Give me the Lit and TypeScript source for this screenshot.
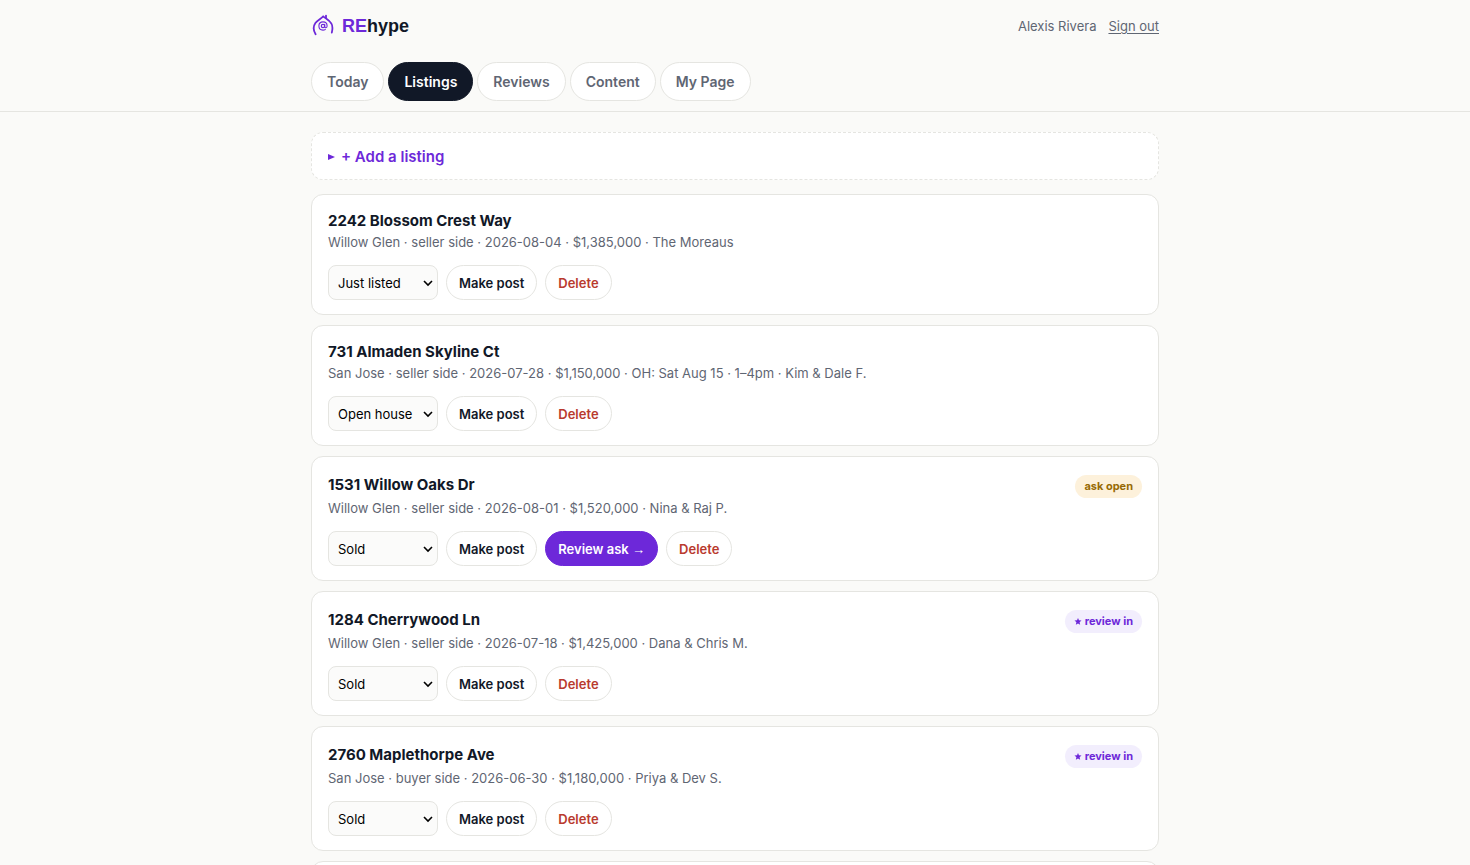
import { LitElement, html, css, nothing } from "lit";
import { customElement, property } from "lit/decorators.js";
import { classMap } from "lit/directives/class-map.js";

type Review = "open" | "in" | null;

interface Listing {
  address: string;
  meta: string;
  status: string;
  review: Review;
}

const STATUSES = ["Just listed", "Open house", "Pending", "Sold"];

const TABS = ["Today", "Listings", "Reviews", "Content", "My Page"];

const LISTINGS: Listing[] = [
  {
    address: "2242 Blossom Crest Way",
    meta: "Willow Glen · seller side · 2026-08-04 · $1,385,000 · The Moreaus",
    status: "Just listed",
    review: null,
  },
  {
    address: "731 Almaden Skyline Ct",
    meta: "San Jose · seller side · 2026-07-28 · $1,150,000 · OH: Sat Aug 15 · 1–4pm · Kim & Dale F.",
    status: "Open house",
    review: null,
  },
  {
    address: "1531 Willow Oaks Dr",
    meta: "Willow Glen · seller side · 2026-08-01 · $1,520,000 · Nina & Raj P.",
    status: "Sold",
    review: "open",
  },
  {
    address: "1284 Cherrywood Ln",
    meta: "Willow Glen · seller side · 2026-07-18 · $1,425,000 · Dana & Chris M.",
    status: "Sold",
    review: "in",
  },
  {
    address: "2760 Maplethorpe Ave",
    meta: "San Jose · buyer side · 2026-06-30 · $1,180,000 · Priya & Dev S.",
    status: "Sold",
    review: "in",
  },
];

@customElement("listing-card")
export class ListingCard extends LitElement {
  @property({ attribute: false }) listing!: Listing;

  static styles = css`
    :host {
      display: block;
      padding: 14px 16px;
      background: #fff;
      border: 1px solid #e5e5e1;
      border-radius: 12px;
    }
    .top {
      display: flex;
      justify-content: space-between;
      align-items: baseline;
      gap: 8px;
    }
    .address {
      margin: 0;
      font-size: 15px;
      line-height: 23px;
      font-weight: 700;
    }
    .badge {
      margin-top: 4px;
      padding: 3px 9px;
      border-radius: 999px;
      font-size: 11px;
      line-height: 17px;
      font-weight: 700;
      white-space: nowrap;
    }
    .badge.open {
      background: #fdf1db;
      color: #976a05;
    }
    .badge.in {
      background: #f2eefd;
      color: #6d28d9;
    }
    .star {
      width: 8px;
      height: 7px;
    }
    .meta {
      margin: 0;
      color: #5f6673;
      font-size: 13px;
      line-height: 20px;
    }
    .actions {
      display: flex;
      flex-wrap: wrap;
      align-items: center;
      gap: 8px;
      margin-top: 13px;
    }
    select,
    button {
      box-sizing: border-box;
      height: 35px;
      border: 1px solid #e5e5e1;
      font-family: inherit;
      font-size: 13px;
    }
    .picker {
      position: relative;
      display: flex;
    }
    select {
      appearance: none;
      width: 110px;
      padding: 0 20px 0 9px;
      border-radius: 8px;
      background: #fbfbfa;
      color: #000;
    }
    .chevron {
      position: absolute;
      right: 5px;
      top: 13px;
      width: 10px;
      height: 10px;
      pointer-events: none;
    }
    button {
      padding: 0 12px;
      border-radius: 999px;
      background: #fff;
      color: #111827;
      font-weight: 600;
      cursor: pointer;
    }
    .primary {
      background: #6d28d9;
      border-color: #6d28d9;
      color: #fff;
    }
    .arrow {
      font-family: "Liberation Sans", sans-serif;
      font-weight: 400;
    }
    .danger {
      color: #b93a2e;
    }
  `;

  render() {
    const { address, meta, status, review } = this.listing;
    return html`
      <div class="top">
        <h2 class="address">${address}</h2>
        ${review === "open" ? html`<span class="badge open">ask open</span>` : nothing}
        ${review === "in"
          ? html`<span class="badge in"
              ><svg class="star" viewBox="0 0 10 10" fill="currentColor" aria-hidden="true">
                <path d="M5 0L6.4 3.3L10 3.7L7.3 6L8.1 9.7L5 7.8L1.9 9.7L2.7 6L0 3.7L3.6 3.3Z" />
              </svg>
              review in</span
            >`
          : nothing}
      </div>
      <p class="meta">${meta}</p>
      <div class="actions">
        <div class="picker">
          <select aria-label="Status of ${address}">
            ${STATUSES.map((s) => html`<option ?selected=${s === status}>${s}</option>`)}
          </select>
          <svg class="chevron" viewBox="0 0 10 10" fill="none" stroke="#000" stroke-width="1.6" aria-hidden="true">
            <path d="M1 3L5 7L9 3" />
          </svg>
        </div>
        <button type="button">Make post</button>
        ${review === "open"
          ? html`<button type="button" class="primary">Review ask <span class="arrow">→</span></button>`
          : nothing}
        <button type="button" class="danger">Delete</button>
      </div>
    `;
  }
}

@customElement("app-root")
export class AppRoot extends LitElement {
  static styles = css`
    :host {
      display: block;
      min-height: 100vh;
      background: #fafaf8;
      color: #111827;
      font-family: Inter, "Liberation Sans", sans-serif;
    }
    .wrap {
      box-sizing: border-box;
      max-width: 880px;
      margin: 0 auto;
      padding: 0 16px;
    }
    .header {
      border-bottom: 1px solid #e5e5e1;
    }
    .bar {
      display: flex;
      align-items: center;
      justify-content: space-between;
      padding: 12px 0;
    }
    .brand {
      display: flex;
      align-items: center;
      gap: 7px;
      color: inherit;
      text-decoration: none;
      font-family: "Liberation Sans", Arial, sans-serif;
      font-size: 18px;
      line-height: 28px;
      font-weight: 700;
    }
    .logo {
      width: 24px;
      height: 24px;
    }
    .re {
      color: #6d28d9;
    }
    .user {
      display: flex;
      gap: 12px;
      color: #5f6673;
      font-size: 13px;
      line-height: 20px;
    }
    .user a {
      color: inherit;
      text-underline-offset: 2px;
    }
    .tabs {
      display: flex;
      gap: 4px;
      padding: 10px 0;
    }
    .tab {
      padding: 8px 15px;
      border: 1px solid #e5e5e1;
      border-radius: 999px;
      background: #fff;
      color: #5f6673;
      font-size: 14px;
      line-height: 21px;
      font-weight: 600;
      text-decoration: none;
    }
    .tab.active {
      background: #111827;
      border-color: #111827;
      color: #fff;
    }
    .list {
      display: flex;
      flex-direction: column;
      gap: 10px;
      padding-top: 20px;
    }
    .add {
      margin-bottom: 4px;
      padding: 13px 16px 11px;
      border: 1px dashed #e5e5e1;
      border-radius: 12px;
      background: #fff;
    }
    .add summary {
      display: flex;
      align-items: center;
      gap: 6px;
      color: #6d28d9;
      font-size: 15px;
      line-height: 22px;
      font-weight: 600;
      cursor: pointer;
    }
    .add summary::before {
      content: "";
      border-left: 7px solid currentColor;
      border-top: 3px solid transparent;
      border-bottom: 3px solid transparent;
    }
    .next {
      min-height: 32px;
      background: #fff;
      border: 1px solid #e5e5e1;
      border-radius: 12px;
    }
  `;

  render() {
    return html`
      <header class="header">
        <div class="wrap">
          <div class="bar">
            <a class="brand" href="#">
              <svg class="logo" viewBox="0 0 24 24" fill="none" stroke="#6d28d9" stroke-linecap="round" aria-hidden="true">
                <path d="M4.6 20.2C2.4 16.6 2 12.4 4.4 9C6.4 6.4 9.8 4.8 12.2 2.4C15 4.6 18.3 6.4 20.3 9.4C22 12.2 21.6 15.4 20.8 18.6" stroke-width="1.8" />
                <path d="M15 4.2V1.6" stroke-width="1.8" />
                <circle cx="12" cy="12" r="1.7" stroke-width="1.2" />
                <path d="M13.7 10.3V12.6C13.7 14.3 16.1 14.1 16.1 11.9C16.1 9.4 14.3 7.9 12 7.9C9.6 7.9 7.9 9.7 7.9 12C7.9 14.5 9.6 16.1 12 16.1C12.9 16.1 13.6 15.9 14.3 15.5" stroke-width="1.1" />
              </svg>
              <span><span class="re">RE</span>hype</span>
            </a>
            <div class="user">
              <span>Alexis Rivera</span>
              <a href="#">Sign out</a>
            </div>
          </div>
          <nav class="tabs" aria-label="Sections">
            ${TABS.map(
              (tab) =>
                html`<a href="#" class=${classMap({ tab: true, active: tab === "Listings" })}>${tab}</a>`,
            )}
          </nav>
        </div>
      </header>
      <main class="wrap list">
        <details class="add">
          <summary>+ Add a listing</summary>
        </details>
        ${LISTINGS.map((l) => html`<listing-card .listing=${l}></listing-card>`)}
        <div class="next"></div>
      </main>
    `;
  }
}
